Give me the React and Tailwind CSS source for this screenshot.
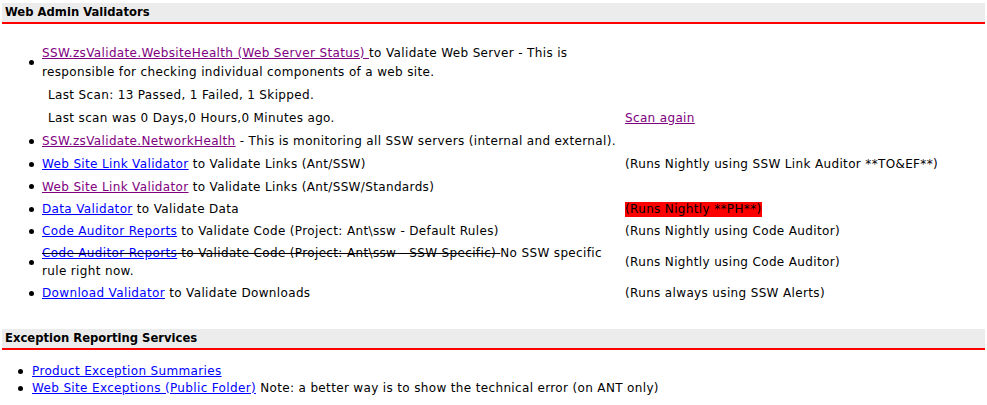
import React from "react";

const font = { fontFamily: '"DejaVu Sans", Verdana, sans-serif' };

function Heading({ children }) {
  return (
    <div className="mx-[2px] h-[21px] bg-[#ececec] border-b-2 border-[#ff0000] pl-[3px] flex items-center font-bold text-black text-[11.6px] tracking-normal">
      {children}
    </div>
  );
}

function Bullet({ x = "ml-[29px]" }) {
  return <span className={`block w-[5px] h-[5px] rounded-full bg-black shrink-0 ${x}`} />;
}

const blue = "text-[#0000ff] underline";
const visited = "text-[#800080] underline";

function Row({ h, bullet = true, children, right, textLeft = "ml-[42px]" }) {
  return (
    <div className={`flex items-center ${h}`}>
      <div className="w-[625px] flex items-center shrink-0 relative">
        {bullet ? (
          <>
            <Bullet />
            <div className="ml-[8px]">{children}</div>
          </>
        ) : (
          <div className={textLeft}>{children}</div>
        )}
      </div>
      <div className="whitespace-nowrap">{right}</div>
    </div>
  );
}

export default function App() {
  return (
    <div className="w-[987px] h-[405px] bg-white text-[12px] tracking-[0.35px] text-black pt-[3px] overflow-hidden" style={font}>
      <Heading>Web Admin Validators</Heading>

      <div className="pt-[18px]">
        <Row h="h-[41px]">
          <div className="leading-[19px] whitespace-nowrap">
            <a href="#" className={visited}>SSW.zsValidate.WebsiteHealth (Web Server Status) </a>
            to Validate Web Server - This is
            <br />
            responsible for checking individual components of a web site.
          </div>
        </Row>
        <Row h="h-[23px]" bullet={false} textLeft="ml-[48px]">
          Last Scan: 13 Passed, 1 Failed, 1 Skipped.
        </Row>
        <Row
          h="h-[23px]"
          bullet={false}
          textLeft="ml-[48px]"
          right={<a href="#" className={visited}>Scan again</a>}
        >
          Last scan was 0 Days,0 Hours,0 Minutes ago.
        </Row>
        <Row h="h-[24px]">
          <span className="whitespace-nowrap">
            <a href="#" className={visited}>SSW.zsValidate.NetworkHealth</a> - This is monitoring all SSW servers (internal and external).
          </span>
        </Row>
        <Row h="h-[22px]" right="(Runs Nightly using SSW Link Auditor **TO&EF**)">
          <a href="#" className={blue}>Web Site Link Validator</a> to Validate Links (Ant/SSW)
        </Row>
        <Row h="h-[23px]">
          <a href="#" className={visited}>Web Site Link Validator</a> to Validate Links (Ant/SSW/Standards)
        </Row>
        <Row
          h="h-[22px]"
          right={<span className="bg-[#ff0000] inline-block leading-[15px]">(Runs Nightly **PH**)</span>}
        >
          <a href="#" className={blue}>Data Validator</a> to Validate Data
        </Row>
        <Row h="h-[22px]" right="(Runs Nightly using Code Auditor)">
          <a href="#" className={blue}>Code Auditor Reports</a> to Validate Code (Project: Ant\ssw - Default Rules)
        </Row>
        <Row h="h-[40px]" right="(Runs Nightly using Code Auditor)">
          <div className="leading-[18px] whitespace-nowrap">
            <s>
              <a href="#" className={blue}>Code Auditor Reports</a> to Validate Code (Project: Ant\ssw - SSW Specific){" "}
            </s>
            No SSW specific
            <br />
            rule right now.
          </div>
        </Row>
        <Row h="h-[22px]" right="(Runs always using SSW Alerts)">
          <a href="#" className={blue}>Download Validator</a> to Validate Downloads
        </Row>
      </div>

      <div className="pt-[25px]">
        <Heading>Exception Reporting Services</Heading>
      </div>

      <div className="pt-[13px] leading-[17px]">
        <div className="flex items-center">
          <span className="block w-[5px] h-[5px] rounded-full bg-black ml-[18px]" />
          <a href="#" className={`ml-[9px] ${blue}`}>Product Exception Summaries</a>
        </div>
        <div className="flex items-center">
          <span className="block w-[5px] h-[5px] rounded-full bg-black ml-[18px]" />
          <span className="ml-[9px] whitespace-nowrap">
            <a href="#" className={blue}>Web Site Exceptions (Public Folder)</a> Note: a better way is to show the technical error (on ANT only)
          </span>
        </div>
      </div>
    </div>
  );
}
